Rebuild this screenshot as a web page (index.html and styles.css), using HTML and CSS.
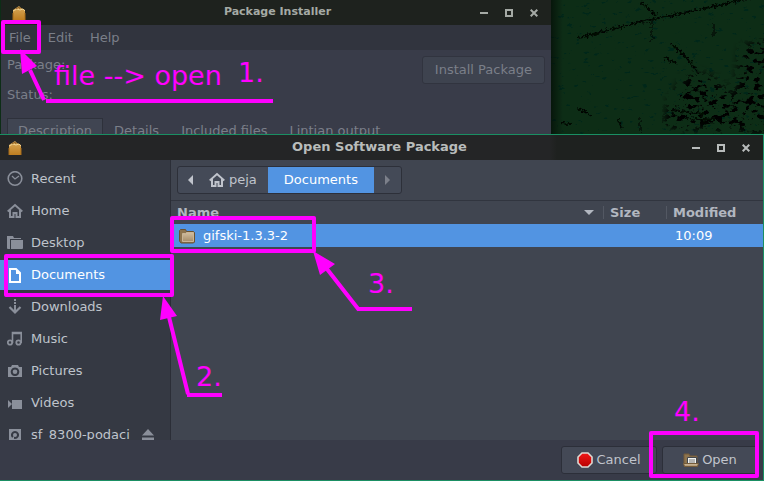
FILE: index.html
```html
<!DOCTYPE html>
<html lang="en">
<head>
<meta charset="utf-8">
<title>Open Software Package</title>
<link rel="stylesheet" href="styles.css">
</head>
<body>
<svg width="0" height="0" class="defs" aria-hidden="true">
  <defs>
    <linearGradient id="box" x1="0" y1="0" x2="0" y2="1"><stop offset="0" stop-color="#d9ab5c"/><stop offset="1" stop-color="#bd7d20"/></linearGradient>
    <linearGradient id="tan" x1="0" y1="0" x2="0" y2="1"><stop offset="0" stop-color="#d3bfa0"/><stop offset="1" stop-color="#a68d69"/></linearGradient>
    <linearGradient id="red" x1="0" y1="0" x2="0" y2="1"><stop offset="0" stop-color="#f01818"/><stop offset="1" stop-color="#b80000"/></linearGradient>
    <symbol id="i-package" viewBox="0 0 16 16"><path d="M2 5l3-2 3-2 2 2 4 2v10H2z" fill="url(#box)"/><path d="M2 6l4-2 3 1 3-1 2 2" fill="none" stroke="#f0d391"/><path d="M5 4l3-2 1 2" fill="none" stroke="#8a5f24"/><path d="M2 15V8M14 15V8" stroke="#a86c1a"/></symbol>
    <symbol id="i-min" viewBox="0 0 8 8"><path d="M0 3h8v2H0z" fill="currentColor"/></symbol>
    <symbol id="i-max" viewBox="0 0 8 8"><path d="M1 1h6v6H1z" fill="none" stroke="currentColor" stroke-width="2"/></symbol>
    <symbol id="i-close" viewBox="0 0 8 8"><path d="M.7.7l6.600 6.600M7.300.7L.7 7.300" stroke="currentColor" stroke-width="2"/></symbol>
    <symbol id="i-home" viewBox="0 0 16 16"><path d="M.7 8.500L8 2 15.300 8.500" fill="none" stroke="currentColor" stroke-width="1.800"/><path d="M3 7v7h3.500v-4h3v4H13V7" fill="none" stroke="currentColor" stroke-width="2"/></symbol>
  </defs>
</svg>

<svg class="wallpaper" preserveAspectRatio="xMaxYMin slice" viewBox="0 0 764 481" aria-hidden="true">
  <defs>
    <filter id="grain" x="0" y="0" width="100%" height="100%"><feTurbulence type="fractalNoise" baseFrequency=".12 .25" numOctaves="4" seed="8"/><feColorMatrix values="0 0 0 0 0  0 0 0 0 .02  0 0 0 0 .01  14 0 0 0 -9.600"/></filter>
    <filter id="scuff" x="0" y="0" width="100%" height="100%"><feTurbulence type="fractalNoise" baseFrequency=".13 .2" numOctaves="4" seed="3" result="n"/><feColorMatrix in="n" values="0 0 0 0 0  0 0 0 0 0  0 0 0 0 0  12 0 0 0 -6.500" result="m"/><feGaussianBlur in="SourceAlpha" stdDeviation="5" result="s"/><feComposite in="m" in2="s" operator="in"/></filter>
    <filter id="rough" x="-5%" y="-5%" width="110%" height="110%"><feTurbulence type="fractalNoise" baseFrequency=".35" numOctaves="3" seed="5"/><feDisplacementMap in="SourceGraphic" scale="7" xChannelSelector="R" yChannelSelector="G"/></filter>
    <linearGradient id="shade"><stop offset="0" stop-color="#000" stop-opacity=".5"/><stop offset="1" stop-color="#000" stop-opacity="0"/></linearGradient>
  </defs>
  <rect width="764" height="481" fill="#0d2d16"/>
  <rect x="551" width="213" height="140" filter="url(#grain)"/>
  <path d="M662 128l8-30 18-26 24 4 22 20 8-50 26-8v96z" filter="url(#scuff)"/>
  <g fill="none" stroke="#020704" filter="url(#rough)">
    <path d="M579 38l25-7 32-8 18-4 30-6 40-9 25-6" stroke-width="2"/>
    <path d="M641 2l15 13M670 43l15 13 14 18M665 58l12 6M672 110l32 4M578 108l14 8M561 123l10 1M618 119l4 9M686 118l30 2" stroke-width="2"/>
    <path d="M652 20v22M714 24v12M640 118v14"/>
  </g>
  <rect x="551" width="12" height="140" fill="url(#shade)"/>
</svg>

<section class="window installer" aria-label="Package Installer">
  <header class="titlebar small">
    <svg class="app" width="16" height="16"><use href="#i-package"/></svg>
    <h2>Package Installer</h2>
    <div class="controls">
      <button aria-label="Minimize"><svg width="8" height="8"><use href="#i-min"/></svg></button>
      <button aria-label="Maximize"><svg width="8" height="8"><use href="#i-max"/></svg></button>
      <button aria-label="Close"><svg width="8" height="8"><use href="#i-close"/></svg></button>
    </div>
  </header>
  <nav class="menubar"><button>File</button><button>Edit</button><button>Help</button></nav>
  <div class="details">
    <div class="info"><p>Package:</p><p>Status:</p></div>
    <button class="btn install" disabled>Install Package</button>
  </div>
  <div class="tabs"><button class="active">Description</button><button>Details</button><button>Included files</button><button>Lintian output</button></div>
</section>

<section class="window dialog" role="dialog" aria-label="Open Software Package">
  <header class="titlebar">
    <svg class="app" width="16" height="16"><use href="#i-package"/></svg>
    <h1>Open Software Package</h1>
    <div class="controls">
      <button aria-label="Minimize"><svg width="8" height="8"><use href="#i-min"/></svg></button>
      <button aria-label="Maximize"><svg width="8" height="8"><use href="#i-max"/></svg></button>
      <button aria-label="Close"><svg width="8" height="8"><use href="#i-close"/></svg></button>
    </div>
  </header>
  <div class="content">
    <nav class="places">
      <a href="#recent"><svg viewBox="0 0 16 16"><circle cx="8" cy="7.500" r="6.800" fill="none" stroke="currentColor" stroke-width="1.600"/><path d="M5 5l3 3 4-3" fill="none" stroke="currentColor" stroke-width="1.300"/></svg>Recent</a>
      <a href="#home"><svg><use href="#i-home"/></svg>Home</a>
      <a href="#desktop"><svg viewBox="0 0 16 16"><path d="M0 1h6l1 2h7v1H3v10H1a1 1 0 0 1-1-1z" fill="currentColor"/><path d="M4 5h12v8a1 1 0 0 1-1 1H4z" fill="currentColor"/></svg>Desktop</a>
      <a href="#documents" class="selected"><svg viewBox="0 0 16 16"><path d="M3 2h6l4 4v9H3z" fill="none" stroke="currentColor" stroke-width="2"/><path d="M9 2v5h4z" fill="currentColor"/></svg>Documents</a>
      <a href="#downloads"><svg viewBox="0 0 16 16"><path d="M7 0h2v2H7zM7 3h2v2H7zM7 6h2v7H7z" fill="currentColor"/><path d="M2.500 8L8 13.500 13.500 8" fill="none" stroke="currentColor" stroke-width="2.200"/></svg>Downloads</a>
      <a href="#music"><svg viewBox="0 0 16 16"><circle cx="3" cy="11.500" r="2.200" fill="none" stroke="currentColor" stroke-width="1.800"/><circle cx="11.500" cy="11.500" r="2.200" fill="none" stroke="currentColor" stroke-width="1.800"/><path d="M5.500 12V1.500h8.700V12M5.500 2.500h8.700" fill="none" stroke="currentColor" stroke-width="1.600"/></svg>Music</a>
      <a href="#pictures"><svg viewBox="0 0 16 16"><path fill-rule="evenodd" d="M1 4h3l1-2h6l1 2h3v10H1zM8 4.500a4.300 4.300 0 1 0 .01 0z" fill="currentColor"/><circle cx="8" cy="8.800" r="2.300" fill="currentColor"/></svg>Pictures</a>
      <a href="#videos"><svg viewBox="0 0 16 16"><path d="M1 5l4 4-4 4zM5 5h10v9H5z" fill="currentColor"/></svg>Videos</a>
      <a href="#sf"><svg viewBox="0 0 16 16"><path fill-rule="evenodd" d="M2 2h12v12H2zM8 4a4 4 0 1 0 .01 0z" fill="currentColor"/><circle cx="8" cy="8" r="2" fill="currentColor"/><path d="M4 12l3-3v3z" fill="currentColor"/></svg>sf_8300-podaci<svg class="eject" viewBox="0 0 12 12"><path d="M6 0l6 6.500H0zM0 8.500h12v2.500H0z" fill="currentColor"/></svg></a>
    </nav>
    <main>
      <div class="toolbar">
        <div class="path">
          <button aria-label="Back"><svg width="5" height="10" viewBox="0 0 5 10"><path d="M5 0v10L0 5z" fill="currentColor"/></svg></button>
          <button class="home"><svg width="16" height="16"><use href="#i-home"/></svg>peja</button>
          <button class="current">Documents</button>
          <button class="next" aria-label="Forward" disabled><svg width="5" height="10" viewBox="0 0 5 10"><path d="M0 0v10l5-5z" fill="currentColor"/></svg></button>
        </div>
      </div>
      <table>
        <colgroup><col><col class="size"><col class="modified"></colgroup>
        <thead><tr><th><div class="sort">Name<svg width="10" height="5"><path d="M0 0h10L5 5z" fill="currentColor"/></svg></div></th><th><div>Size</div></th><th><div>Modified</div></th></tr></thead>
        <tbody><tr><td><div class="file"><svg width="16" height="16" viewBox="0 0 16 16"><path d="M.5 13V2.500l1-1h5l1 2h7l1 1V14l-1 1H2z" fill="#8d744f" stroke="#6b5230"/><path d="M3.500 13.500v-8h3l1-1h7v9z" fill="url(#tan)" stroke="#c9b596"/></svg>gifski-1.3.3-2</div></td><td></td><td class="time">10:09</td></tr></tbody>
      </table>
    </main>
  </div>
  <footer>
    <button class="btn"><svg width="16" height="16" viewBox="0 0 16 16"><path d="M5 1h6l4 4v6l-4 4H5l-4-4V5z" fill="url(#red)" stroke="#ddd9d3" stroke-width="1.600"/></svg>Cancel</button>
    <button class="btn"><svg width="16" height="16" viewBox="0 0 16 16"><path d="M1 13V2h5l1 2h7v9z" fill="#8d744f" stroke="#745b39"/><path d="M4.500 5.500h9v7h-9z" fill="#f2f2ee" stroke="#43474d"/><path d="M6 8h6M6 10h6" stroke="#777"/><path d="M.5 11.500h15l-1 3h-13z" fill="url(#tan)" stroke="#745b39"/></svg>Open</button>
  </footer>
</section>

<svg class="notes" width="764" height="481" viewBox="0 0 764 481">
  <g fill="none" stroke="#f0f" stroke-width="4" stroke-linejoin="round">
    <rect x="3" y="22" width="36" height="30"/>
    <rect x="6" y="256" width="166" height="39"/>
    <rect x="172" y="218" width="142" height="33"/>
    <rect x="651" y="433" width="106" height="43"/>
    <path d="M30 70l14 30M46 101h227M169 317l19 77M187 395h35M327 269l32 41M358 309h54"/>
  </g>
  <path d="M20 49l2 25 15-8zM163 296l-3 24 17-4zM313 251l7 24 15-11z" fill="#f0f"/>
  <text x="54" y="85">file --&gt; open</text>
  <text x="238" y="82">1.</text>
  <text x="196" y="386">2.</text>
  <text x="368" y="293">3.</text>
  <text x="674" y="421">4.</text>
</svg>
</body>
</html>
```
FILE: styles.css
```css
* { box-sizing: border-box; }

body {
  margin: 0;
  min-height: 100vh;
  position: relative;
  overflow: hidden;
  background: #0e2c16;
  color: #c0c4cc;
  font: 13px/16px "DejaVu Sans", sans-serif;
}

button {
  margin: 0;
  padding: 0;
  border: 0;
  background: none;
  color: inherit;
  font: inherit;
}

h1, h2, p { margin: 0; font-size: inherit; }
svg { flex: none; }

.defs { position: absolute; }
.wallpaper { position: absolute; inset: 0; width: 100%; height: 100%; }
.window { position: absolute; display: flex; flex-direction: column; }

/* Title bars */
.titlebar {
  display: flex;
  align-items: center;
  height: 25px;
  padding: 0 13px 0 7px;
  background: linear-gradient(90deg, #242526 72%, #1e211f 73%);
  color: #b8bcbb;
}
.titlebar h1, .titlebar h2 { flex: 1; padding: 0 0 2px 44px; text-align: center; }
.titlebar.small {
  padding-left: 10px;
  background: #1e221e;
  color: #a5aaa5;
  font-size: 11px;
}
.titlebar.small h2 { padding-left: 48px; }
.controls { display: flex; gap: 17px; }
.controls button { display: flex; }

/* Package installer */
.installer {
  top: 0;
  left: 1px;
  width: 550px;
  height: 160px;
  background: #393c49;
  color: #7b7f89;
}
.menubar {
  display: flex;
  gap: 17px;
  align-items: center;
  height: 25px;
  padding: 0 8px;
  background: #31343e;
}
.details {
  display: flex;
  justify-content: space-between;
  align-items: flex-start;
  padding: 6px 6px 0;
}
.info { display: grid; gap: 14px; padding-top: 1px; }
.btn {
  display: flex;
  align-items: center;
  justify-content: center;
  gap: 3px;
  height: 28px;
  border: 1px solid #2c2f39;
  border-radius: 3px;
  background: #444956;
}
.install { padding: 0 12px; background: #3e434f; border-color: #31343f; }
.tabs { display: flex; margin: 15px 6px 0; }
.tabs button { height: 24px; padding: 0 11px; border-top: 1px solid transparent; }
.tabs .active { border: 1px solid #2e313b; border-bottom: 0; background: #404552; padding: 0 10px; }

/* File chooser */
.dialog {
  top: 134px;
  right: 0;
  bottom: 0;
  left: 0;
  border: solid #1a8f63;
  border-width: 1px 1px 1px 0;
  background: #383b48;
}
.content { display: flex; flex: 1; min-height: 0; }
.places {
  display: flex;
  flex-direction: column;
  gap: 2px;
  width: 171px;
  padding-top: 4px;
  overflow: hidden;
  border-right: 1px solid #2b2e37;
  background: #353943;
}
.places a {
  display: flex;
  flex: none;
  align-items: center;
  gap: 8px;
  height: 30px;
  padding: 0 7px;
  color: #bfc4cc;
  text-decoration: none;
}
.places svg { width: 16px; height: 16px; color: #8a8f9a; }
.places .selected { background: #5294e2; color: #fff; }
.places .selected svg { color: #fff; }
.places .eject { width: 12px; height: 12px; margin-left: 4px; }

main { flex: 1; min-width: 0; background: #404550; }
.toolbar { padding: 6px; border-bottom: 1px solid #31353f; }
.path {
  display: flex;
  width: max-content;
  height: 28px;
  border: 1px solid #2d3039;
  border-radius: 3px;
  background: #444a57;
}
.path button { display: flex; align-items: center; padding: 0 10px; }
.path .home { gap: 4px; padding: 0 11px 0 6px; }
.path .current { padding: 0 16px; background: #5294e2; color: #fff; }
.path .next { padding: 0 11px; color: #7c808a; }

table { width: 100%; table-layout: fixed; border-collapse: collapse; }
.size { width: 63px; }
.modified { width: 97px; }
th, td { height: 23px; padding: 0; text-align: left; }
th { color: #b2b7c0; }
th div { padding: 0 6px; line-height: 13px; border-left: 1px solid #535863; }
th .sort { display: flex; justify-content: space-between; align-items: center; padding-right: 9px; border-left: 0; }
tbody tr { background: #5294e2; color: #fff; }
.file { display: flex; align-items: center; gap: 8px; padding-left: 8px; }
.time { padding-left: 9px; }

footer {
  display: flex;
  justify-content: flex-end;
  gap: 5px;
  padding: 6px 5px 6px 6px;
}
footer .btn { width: 96px; padding-bottom: 1px; }

/* Callouts drawn over both windows */
.notes { position: absolute; top: 0; left: 0; pointer-events: none; }
.notes text { fill: #f0f; font-size: 27px; }
```
